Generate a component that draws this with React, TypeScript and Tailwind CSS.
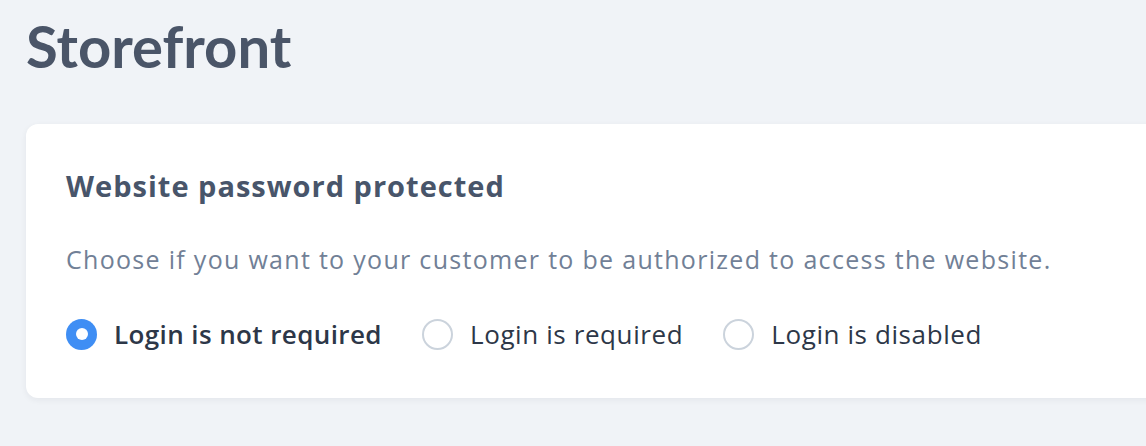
import React, { useState } from 'react';

const options = [
  { id: 'not-required', label: 'Login is not required' },
  { id: 'required', label: 'Login is required' },
  { id: 'disabled', label: 'Login is disabled' },
];

const Radio = ({ checked }: { checked: boolean }) =>
  checked ? (
    <span className="flex h-[31px] w-[31px] shrink-0 items-center justify-center rounded-full bg-[#3f8ef4]">
      <span className="h-[12px] w-[12px] rounded-full bg-white"></span>
    </span>
  ) : (
    <span className="h-[31px] w-[31px] shrink-0 rounded-full border-2 border-[#cbd3dc] bg-white"></span>
  );

const App = () => {
  const [value, setValue] = useState('not-required');

  return (
    <div
      className="min-h-[446px] w-full overflow-hidden bg-[#f0f3f7] pl-[26px] pt-[8px]"
      style={{ fontFamily: '"Open Sans", Lato, sans-serif' }}
    >
      <h1
        className="whitespace-nowrap text-[58px] font-bold leading-[76px] text-[#4a5568]"
        style={{ fontFamily: 'Lato, sans-serif' }}
      >
        Storefront
      </h1>

      <div className="mt-[40px] w-[1200px] rounded-[12px] bg-white px-[40px] pb-[48px] pt-[44px] shadow-[0_2px_6px_rgba(30,41,59,0.06)]">
        <h2 className="whitespace-nowrap text-[29px] font-bold leading-[36px] tracking-[1px] text-[#48556a]">
          Website password protected
        </h2>
        <p className="mt-[39px] whitespace-nowrap text-[25px] leading-[32px] tracking-[1.3px] text-[#718096]">
          Choose if you want to your customer to be authorized to access the website.
        </p>
        <div className="mt-[43px] flex items-center gap-[40px]">
          {options.map((o) => (
            <label
              key={o.id}
              className="flex cursor-pointer items-center gap-[17px]"
              onClick={() => setValue(o.id)}
            >
              <Radio checked={value === o.id} />
              <span
                className={
                  value === o.id
                    ? 'whitespace-nowrap text-[26px] font-semibold leading-[32px] tracking-[0.4px] text-[#2d3748]'
                    : 'whitespace-nowrap text-[26px] leading-[32px] tracking-[0.6px] text-[#2d3748]'
                }
              >
                {o.label}
              </span>
            </label>
          ))}
        </div>
      </div>
    </div>
  );
};

export default App;
